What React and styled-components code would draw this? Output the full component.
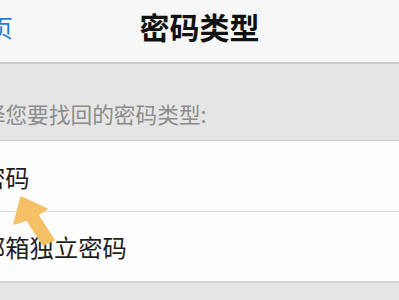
import React from 'react';
import styled, { createGlobalStyle } from 'styled-components';

const GlobalStyle = createGlobalStyle`
  html, body {
    margin: 0;
    padding: 0;
    background: #e5e5e5;
    overflow: hidden;
  }
  body {
    font-family: "Noto Sans CJK SC", "Noto Sans", sans-serif;
  }
`;

const Screen = styled.div`
  width: 399px;
  height: 300px;
  display: flex;
  flex-direction: column;
  background: #e5e5e5;
  position: relative;
  overflow: hidden;
`;

const NavBar = styled.header`
  height: 64px;
  flex-shrink: 0;
  display: grid;
  grid-template-columns: 1fr auto 1fr;
  align-items: center;
  padding-bottom: 10px;
  box-sizing: border-box;
  background: #f7f7f7;
  border-bottom: 2px solid #cbcbcb;
`;

const BackLink = styled.span`
  justify-self: start;
  margin-left: -35px;
  font-size: 24px;
  color: #2b7cd3;
  white-space: nowrap;
`;

const Title = styled.h1`
  margin: 0;
  font-size: 30px;
  font-weight: 700;
  color: #111;
`;

const SectionHeader = styled.div`
  height: 77px;
  flex-shrink: 0;
  display: flex;
  align-items: flex-end;
  padding-bottom: 11px;
  box-sizing: border-box;
  border-bottom: 1px solid #d0d0d0;
`;

const SectionText = styled.span`
  margin-left: -38px;
  font-size: 21.7px;
  color: #8c8c8c;
  white-space: nowrap;
`;

const List = styled.ul`
  list-style: none;
  margin: 0;
  padding: 0;
  flex-shrink: 0;
  background: #fdfdfd;
  border-bottom: 2px solid #d2d2d2;
`;

const Row = styled.li`
  height: ${p => p.$h}px;
  display: flex;
  align-items: center;
  box-sizing: border-box;
  border-bottom: ${p => (p.$last ? 'none' : '1px solid #dedede')};
`;

const RowText = styled.span`
  margin-left: -19px;
  font-size: 24.3px;
  color: #1e1e1e;
  white-space: nowrap;
`;

const Pointer = styled.svg`
  position: absolute;
  left: 0;
  top: 0;
  pointer-events: none;
`;

export default function App() {
  return (
    <>
      <GlobalStyle />
      <Screen>
        <NavBar>
          <BackLink>首页</BackLink>
          <Title>密码类型</Title>
          <span />
        </NavBar>
        <SectionHeader>
          <SectionText>选择您要找回的密码类型:</SectionText>
        </SectionHeader>
        <List>
          <Row $h={71}>
            <RowText>密码</RowText>
          </Row>
          <Row $h={69} $last>
            <RowText>邮箱独立密码</RowText>
          </Row>
        </List>
        <Pointer width="399" height="300" viewBox="0 0 399 300">
          <polygon
            points="21,197 47,209 38,215 54,240 43,245 27,220 14,224"
            fill="#f5c066"
            stroke="#f5c066"
            strokeWidth="1.5"
            strokeLinejoin="round"
          />
        </Pointer>
      </Screen>
    </>
  );
}
